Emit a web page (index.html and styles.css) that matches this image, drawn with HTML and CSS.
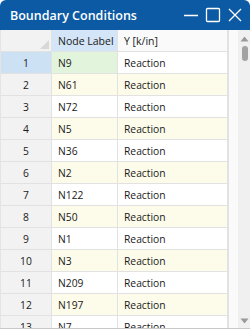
FILE: index.html
```html
<!DOCTYPE html>
<html>
<head>
<meta charset="utf-8">
<link rel="stylesheet" href="styles.css">
</head>
<body>
<div class="window">
  <div class="titlebar">
    <span class="title">Boundary Conditions</span>
    <div class="controls">
      <svg class="ctl" width="16" height="16" viewBox="0 0 16 16"><path d="M1 8.5H15" stroke="#fff" stroke-width="1.3" fill="none"/></svg>
      <svg class="ctl" width="16" height="16" viewBox="0 0 16 16"><rect x="1.5" y="1.5" width="13" height="13" rx="1" stroke="#fff" stroke-width="1.3" fill="none"/></svg>
      <svg class="ctl" width="16" height="16" viewBox="0 0 16 16"><path d="M2 2L14 14M14 2L2 14" stroke="#fff" stroke-width="1.3" fill="none"/></svg>
    </div>
  </div>
  <div class="body">
    <div class="grid">
      <div class="row head">
        <div class="c num corner"><span class="tri"></span></div>
        <div class="c lab hsel">Node Label</div>
        <div class="c val hd">Y [k/in]</div>
      </div>
      <div class="row"><div class="c num nsel">1</div><div class="c lab csel">N9</div><div class="c val">Reaction</div></div>
      <div class="row alt"><div class="c num">2</div><div class="c lab">N61</div><div class="c val">Reaction</div></div>
      <div class="row"><div class="c num">3</div><div class="c lab">N72</div><div class="c val">Reaction</div></div>
      <div class="row alt"><div class="c num">4</div><div class="c lab">N5</div><div class="c val">Reaction</div></div>
      <div class="row"><div class="c num">5</div><div class="c lab">N36</div><div class="c val">Reaction</div></div>
      <div class="row alt"><div class="c num">6</div><div class="c lab">N2</div><div class="c val">Reaction</div></div>
      <div class="row"><div class="c num">7</div><div class="c lab">N122</div><div class="c val">Reaction</div></div>
      <div class="row alt"><div class="c num">8</div><div class="c lab">N50</div><div class="c val">Reaction</div></div>
      <div class="row"><div class="c num">9</div><div class="c lab">N1</div><div class="c val">Reaction</div></div>
      <div class="row alt"><div class="c num">10</div><div class="c lab">N3</div><div class="c val">Reaction</div></div>
      <div class="row"><div class="c num">11</div><div class="c lab">N209</div><div class="c val">Reaction</div></div>
      <div class="row alt"><div class="c num">12</div><div class="c lab">N197</div><div class="c val">Reaction</div></div>
      <div class="row"><div class="c num">13</div><div class="c lab">N7</div><div class="c val">Reaction</div></div>
    </div>
    <div class="gap"></div>
    <div class="scroll">
      <svg width="9" height="6" viewBox="0 0 9 6"><path d="M0.5 5.5L4.5 0.5L8.5 5.5Z" fill="#9a9a9a"/></svg>
      <div class="thumb"></div>
      <div class="spacer"></div>
      <svg width="9" height="6" viewBox="0 0 9 6"><path d="M0.5 0.5L4.5 5.5L8.5 0.5Z" fill="#9a9a9a"/></svg>
    </div>
  </div>
</div>
</body>
</html>
```
FILE: styles.css
```css
html, body { margin: 0; padding: 0; background: #ffffff; }
body { width: 250px; height: 331px; overflow: hidden; font-family: "Open Sans", "Noto Sans", sans-serif; }
.window { width: 250px; height: 328px; display: flex; flex-direction: column; border-radius: 6px 6px 0 0; overflow: hidden; background: #fff; border-bottom: 1px solid #c8c8c8; }
.titlebar { height: 30px; flex: none; background: #0b5aa3; display: flex; align-items: center; justify-content: space-between; padding: 0 7px 0 10px; }
.title { color: #fff; font-weight: 600; font-size: 12.5px; white-space: nowrap; }
.controls { display: flex; gap: 6px; align-items: center; }
.ctl { display: block; }
.body { flex: 1; display: flex; min-height: 0; overflow: hidden; border-left: 1px solid #e4e4e4; }
.grid { width: 227px; flex: none; display: flex; flex-direction: column; overflow: hidden; }
.row { display: flex; height: 22px; flex: none; }
.c { box-sizing: border-box; height: 22px; border-right: 1px solid #e2e2e2; border-bottom: 1px solid #e2e2e2; font-size: 10.3px; color: #1a1a1a; display: flex; align-items: center; white-space: nowrap; overflow: hidden; }
.num { width: 51px; justify-content: center; background: #f2f2f2; }
.lab { width: 66px; padding-left: 6px; }
.val { width: 110px; padding-left: 6px; background: #fff; }
.alt .lab, .alt .val { background: #fdfbea; }
.head .c { font-size: 10.5px; }
.corner { position: relative; background: #f2f2f2; }
.tri { position: absolute; right: 2px; bottom: 2px; width: 0; height: 0; border-left: 9px solid transparent; border-bottom: 9px solid #d8d8d8; }
.hsel { background: #d3e5f7; }
.hd { background: #fafafa; }
.nsel { background: #cde1f5; }
.csel { background: #e3f4dc; }
.gap { width: 9px; flex: none; background: #fafafa; border-left: 1px solid #e2e2e2; }
.scroll { width: 13px; flex: none; background: #f0f0f0; display: flex; flex-direction: column; align-items: center; padding: 6px 0 4px; box-sizing: border-box; }
.thumb { width: 6px; height: 15px; border-radius: 3px; background: #a3a3a3; margin-top: 4px; }
.spacer { flex: 1; }
```
